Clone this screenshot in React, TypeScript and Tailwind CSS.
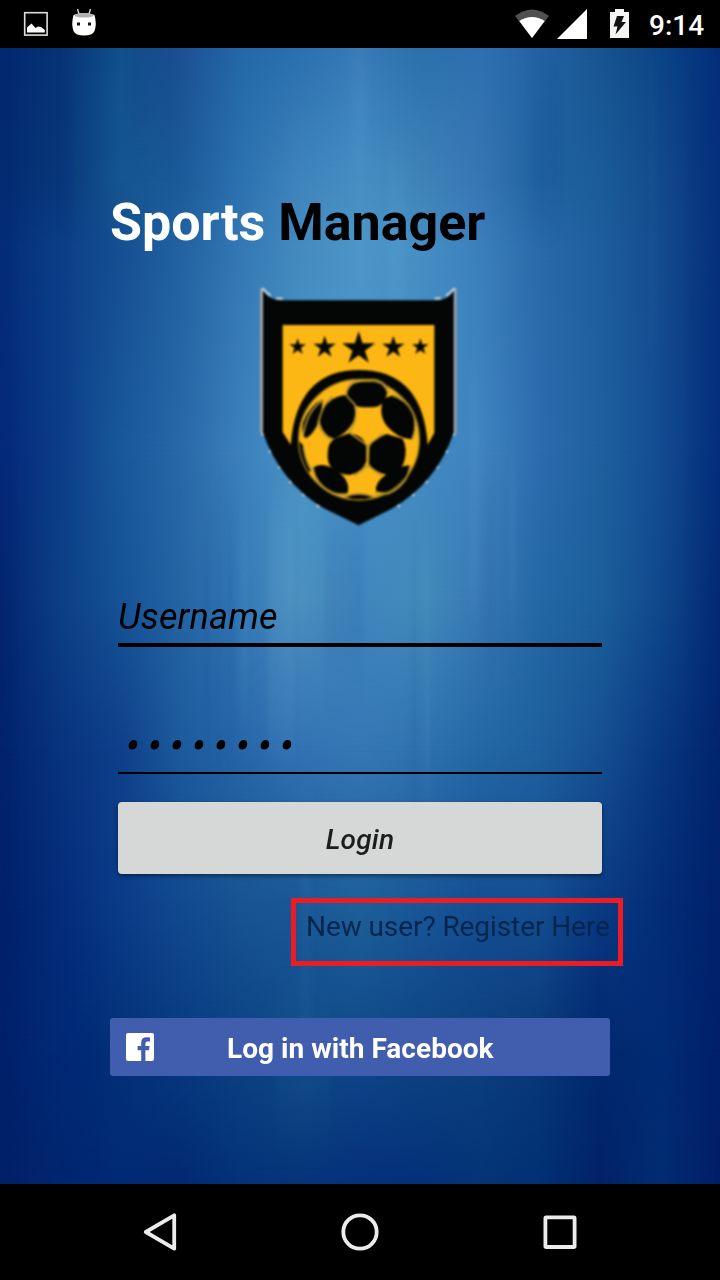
import React from "react";

// Colour rows of the backdrop: each is a horizontal ramp, cross-faded downwards.
const ROWS: { y: number; colors: string }[] = [
  { y: 0, colors: "02286f 083377 11508c 1c5093 2468a7 2b70af 387ab8 2b70ab 2e70b0 2464a4 185490 0b4586 042f7c" },
  { y: 130, colors: "032b72 083779 15568f 1b5a99 2c71b0 3f84bc 458fc3 3f83b8 3776b4 1f62a0 1b5c9a 134a8c 05307c" },
  { y: 202, colors: "042c78 0b3f88 164f92 2262a2 3478b4 438cc0 4c96c8 4590c4 3b80bc 2a6aaa 1e5e9e 154c8e 05307c" },
  { y: 402, colors: "04297a 0c3d88 18589a 2868a8 3c80bc 4994c6 4792c8 4189c2 4084c0 2c6cae 1f609f 134c92 042f7c" },
  { y: 552, colors: "03256f 0c3f86 155396 2564a3 3378b6 4b90be 4086be 438cba 3778b4 2468a6 1c5f9c 10498c 042a74" },
  { y: 702, colors: "02236c 08337e 0f3f8a 1c5a9c 2766a8 3272b3 3577b5 2f72b0 2468a6 1e609e 165092 083880 02266e" },
  { y: 852, colors: "01216a 042c7a 0a3c88 124a90 185493 1b5898 1d6199 1a5798 144f92 154f92 0b3c84 042d78 01236c" },
  { y: 1002, colors: "01206a 012a76 043078 063a80 0c4284 104a88 10488a 0d4484 0c4080 083878 02286e 012c74 01206a" },
  { y: 1136, colors: "002068 01266e 012a74 022970 033278 063478 05307a 043078 043476 013074 012268 012c72 001f68" },
];

// Soft vertical streaks: x, y, width, height, opacity (negative is dark).
const STREAKS = [
  [8, 0, 5, 1136, -0.08], [60, 40, 10, 300, -0.03], [130, 0, 44, 80, -0.04],
  [205, 480, 4, 200, -0.05], [218, 460, 3, 220, -0.04], [228, 480, 5, 200, -0.04], [240, 480, 8, 180, 0.03],
  [268, 460, 26, 240, 0.04], [325, 470, 38, 150, -0.035], [350, 0, 18, 120, 0.025],
  [388, 110, 18, 180, 0.03], [412, 520, 5, 230, -0.04], [425, 500, 4, 260, 0.04],
  [470, 330, 8, 240, 0.03], [488, 430, 4, 160, -0.04], [510, 400, 6, 180, 0.03], [530, 0, 30, 150, -0.03],
  [650, 20, 6, 300, 0.015], [690, 0, 10, 900, -0.04],
  [708, 0, 5, 1136, -0.05], [555, 890, 50, 80, -0.03], [60, 930, 40, 150, -0.03],
  [300, 740, 12, 280, 0.015], [275, 960, 55, 120, 0.015],
];

function ramp(colors: string) {
  return `linear-gradient(to right, ${colors.split(" ").map((c) => "#" + c).join(", ")})`;
}

function Backdrop() {
  return (
    <div className="absolute inset-0 overflow-hidden">
      {ROWS.map((row, i) => {
        const fade = i
          ? `linear-gradient(to bottom, transparent ${ROWS[i - 1].y}px, black ${row.y}px)`
          : undefined;
        return (
          <div
            key={row.y}
            className="absolute inset-0"
            style={{ backgroundImage: ramp(row.colors), maskImage: fade }}
          />
        );
      })}
      <svg className="absolute inset-0" width="720" height="1136" aria-hidden="true">
        <defs>
          <filter id="streak" x="0" y="0" width="720" height="1136" filterUnits="userSpaceOnUse" colorInterpolationFilters="sRGB">
            <feGaussianBlur stdDeviation="2.5 30" />
          </filter>
        </defs>
        <g filter="url(#streak)">
          {STREAKS.map(([x, y, w, h, o], i) => (
            <rect key={i} x={x} y={y} width={w} height={h} fill={o < 0 ? "#001a70" : "#9fd8ff"} opacity={Math.abs(o) * 1.7} />
          ))}
        </g>
      </svg>
    </div>
  );
}

function Star({ x, y, r }: { x: number; y: number; r: number }) {
  const points = Array.from({ length: 10 }, (_, i) => {
    const a = -Math.PI / 2 + (i * Math.PI) / 5;
    const d = i % 2 ? r * 0.38 : r;
    return `${(x + d * Math.cos(a)).toFixed(2)},${(y + d * Math.sin(a)).toFixed(2)}`;
  }).join(" ");
  return <polygon points={points} fill="#050705" />;
}

function Crest() {
  return (
    <svg width="240" height="270" viewBox="0 0 720 810" className="block" aria-hidden="true">
      <defs>
        <filter id="soften" x="0" y="0" width="720" height="810" filterUnits="userSpaceOnUse" colorInterpolationFilters="sRGB">
          <feGaussianBlur stdDeviation="2.4" />
        </filter>
        <clipPath id="ball">
          <circle cx="357" cy="509" r="181" />
        </clipPath>
      </defs>
      <g filter="url(#soften)">
        <path d="M65 490V55M645 490V55" stroke="#a9a9a9" strokeWidth="8" />
        <path d="M67 55Q80 70 92 77M108 86H128M644 55Q631 70 619 77M603 86H584" stroke="#c5d4dc" strokeWidth="7" fill="none" />
        <path d="M68 490Q120 635 250 718M642 490Q590 640 455 720" stroke="#d3dde2" strokeWidth="9" strokeDasharray="7 48" fill="none" />
        <path d="M69 62Q88 91 126 91H586Q624 91 641 62V488Q590 638 455 716L356 766L250 714Q120 635 69 488Z" fill="#040605" />
        <path d="M128 165H583V488L563 524Q548 300 357 300Q170 300 152 524L128 486Z" fill="#fdb714" />
        <Star x={173} y={231} r={26} />
        <Star x={254} y={232} r={35} />
        <Star x={356} y={236} r={52} />
        <Star x={460} y={232} r={35} />
        <Star x={541} y={231} r={26} />
        <circle cx="357" cy="509" r="181" fill="#fdb714" />
        <g clipPath="url(#ball)" fill="#040605">
          <path d="M321 369Q330 335 370 335H400Q434 337 441 370Q434 412 395 412H370Q328 410 321 369Z" />
          <path d="M239 456Q240 413 277 388Q317 366 337 384Q355 417 340 456Q318 494 281 506Q250 497 239 456Z" />
          <path d="M424 416Q425 383 454 377Q500 390 517 430Q531 467 514 508Q476 507 444 472Q422 447 424 416Z" />
          <path d="M249 388Q212 403 190 455Q181 490 198 505Q232 484 243 430Z" />
          <path d="M263 550Q264 515 286 505L329 489Q374 499 379 530V574Q370 606 329 615Q290 611 275 593Q261 580 263 550Z" />
          <path d="M388 532Q393 512 440 492L488 506Q504 536 492 576Q484 606 443 616Q399 604 387 582Z" />
          <path d="M221 592Q251 574 292 604Q332 632 323 669Q286 678 251 649Q224 624 221 592Z" />
          <path d="M408 664Q403 636 442 611Q476 588 509 586Q502 626 474 651Q438 675 408 664Z" />
          <path d="M312 680Q356 659 404 680Q357 697 312 680Z" />
          <path d="M174 510L188 524L196 558L212 596L205 620L176 570Z" />
        </g>
        <g fill="none" stroke="#b59633" strokeWidth="5">
          <path d="M318 374Q323 330 370 329H404Q444 339 445 371" />
          <path d="M320 378L344 403Q357 450 325 491M237 463Q243 493 277 510M233 466Q247 399 278 380" />
          <path d="M250 391Q200 420 189 500M454 374Q507 387 524 443Q531 478 516 510" />
          <path d="M383 525V589M382 526L330 489M383 526L430 491M382 588L342 618M385 588L426 618" />
          <path d="M219 590Q222 643 282 672L322 674M512 588Q502 645 443 672L405 673" />
          <path d="M190 530Q200 590 219 604M312 682Q356 661 404 682" />
        </g>
        <circle cx="357" cy="509" r="181" fill="none" stroke="#9f8020" strokeWidth="4" />
      </g>
    </svg>
  );
}

function StatusBar() {
  return (
    <header className="flex h-12 shrink-0 items-center justify-between bg-black text-white">
      <svg width="120" height="48" viewBox="0 0 120 48" aria-hidden="true">
        <rect x="24.7" y="12.7" width="22.4" height="22.4" fill="none" stroke="#ddd" strokeWidth="1.6" />
        <path d="M27 32.5V27.5L31.5 23.5L35.5 28L38 26.5L41 27L44.8 30V32.5Z" fill="#fff" />
        <path d="M77.5 9L79 14M90.5 9L89 14" stroke="#ddd" strokeWidth="1.3" />
        <path d="M73.5 15Q84 11 94.5 15Q97 24 94.5 31Q92.5 35.500 84 35.500Q75.500 35.500 73.500 31Q71 24 73.500 15Z" fill="#fff" />
        <ellipse cx="84" cy="15.3" rx="9.8" ry="2.3" fill="#b0b0b0" />
        <path d="M77 22.5H80V25.5H77ZM88 22.5H91V25.5H88Z" fill="#111" />
      </svg>
      <div className="flex items-center">
        <svg width="149" height="48" viewBox="500 0 149 48" aria-hidden="true">
          <path d="M515 16Q532 3 549 16L532 38Z" fill="#505050" />
          <path d="M519.3 21Q532 13 544.7 21L532 38Z" fill="#fff" />
          <path d="M587 9V39H557Z" fill="#fff" />
          <path d="M615 9H624V12H629V38H610V12H615Z" fill="#f4f4f4" />
          <path d="M617 16H624L621.5 22H626L615.5 34.5L617.5 26.5H613.5Z" fill="#111" />
        </svg>
        <span className="w-[71px] whitespace-nowrap pt-[3px] text-[28px] font-medium leading-8">9:14</span>
      </div>
    </header>
  );
}

function NavBar() {
  return (
    <nav className="flex h-24 shrink-0 items-center justify-center bg-black">
      <svg width="480" height="96" viewBox="120 1184 480 96" fill="none" stroke="#ececec" strokeWidth="3.8" aria-hidden="true">
        <path d="M174.2 1215.3V1248.7L145.8 1232Z" strokeLinejoin="round" />
        <circle cx="360" cy="1232" r="16.7" />
        <rect x="545.4" y="1217.4" width="29.2" height="29.6" rx="0.8" />
      </svg>
    </nav>
  );
}

export default function App() {
  return (
    <div className="flex h-[1280px] w-[720px] flex-col overflow-hidden bg-black font-['Roboto',sans-serif]">
      <StatusBar />
      <main className="relative isolate flex-1">
        <Backdrop />
        <div className="relative flex flex-col px-[110px] pt-[145px]">
          <h1 className="whitespace-nowrap text-[52px] font-bold leading-[60px] text-black">
            <span className="text-white">Sports</span> Manager
          </h1>
          <div className="mt-[17px] h-[270px] pl-[130px]">
            <Crest />
          </div>
          <div className="mx-2 mt-14 h-[51px] border-b-4 border-black text-[36px] italic leading-[42px] tracking-[0.15px] text-black">
            Username
          </div>
          <div className="mx-2 mt-[77px] h-[50px] border-b-2 border-black pl-[7px] pt-px text-[44px] italic leading-[42px] tracking-[7.6px] text-black">
            <span className="inline-block -skew-x-6">••••••••</span>
          </div>
          <button className="mx-2 mt-7 h-[72px] rounded-[4px] bg-[#d6d8d7] pt-[3px] text-[28px] font-medium italic leading-8 tracking-[0.2px] text-[#1c1d1d] shadow-[0_2px_4px_rgba(0,0,0,0.45)]">
            Login
          </button>
          <div className="-mr-[13px] mt-6 flex h-[68px] w-[332px] self-end whitespace-nowrap border-[5px] border-[#ec1c24] pl-[10px] pt-2 text-[28px] leading-8 tracking-[-0.08px] text-[#04264e]">
            New user? Register Here
          </div>
          <button className="mt-[52px] flex h-[58px] items-center rounded-[3px] bg-[#415dae] pl-4 text-white">
            <svg width="28" height="28" viewBox="0 0 28 28" aria-hidden="true">
              <path d="M2 0H26Q28 0 28 2V26Q28 28 26 28H19.4V17.2H23L23.6 13H19.4V10.4Q19.4 8.4 21.6 8.4H24V4.4L20.8 4.2Q15.2 4.2 15.2 9.6V13H11.6V17.2H15.2V28H2Q0 28 0 26V2Q0 0 2 0Z" fill="#fff" />
            </svg>
            <span className="ml-[73px] whitespace-nowrap pt-[3px] text-[28px] font-bold leading-8 tracking-[0.03px]">Log in with Facebook</span>
          </button>
        </div>
      </main>
      <NavBar />
    </div>
  );
}
